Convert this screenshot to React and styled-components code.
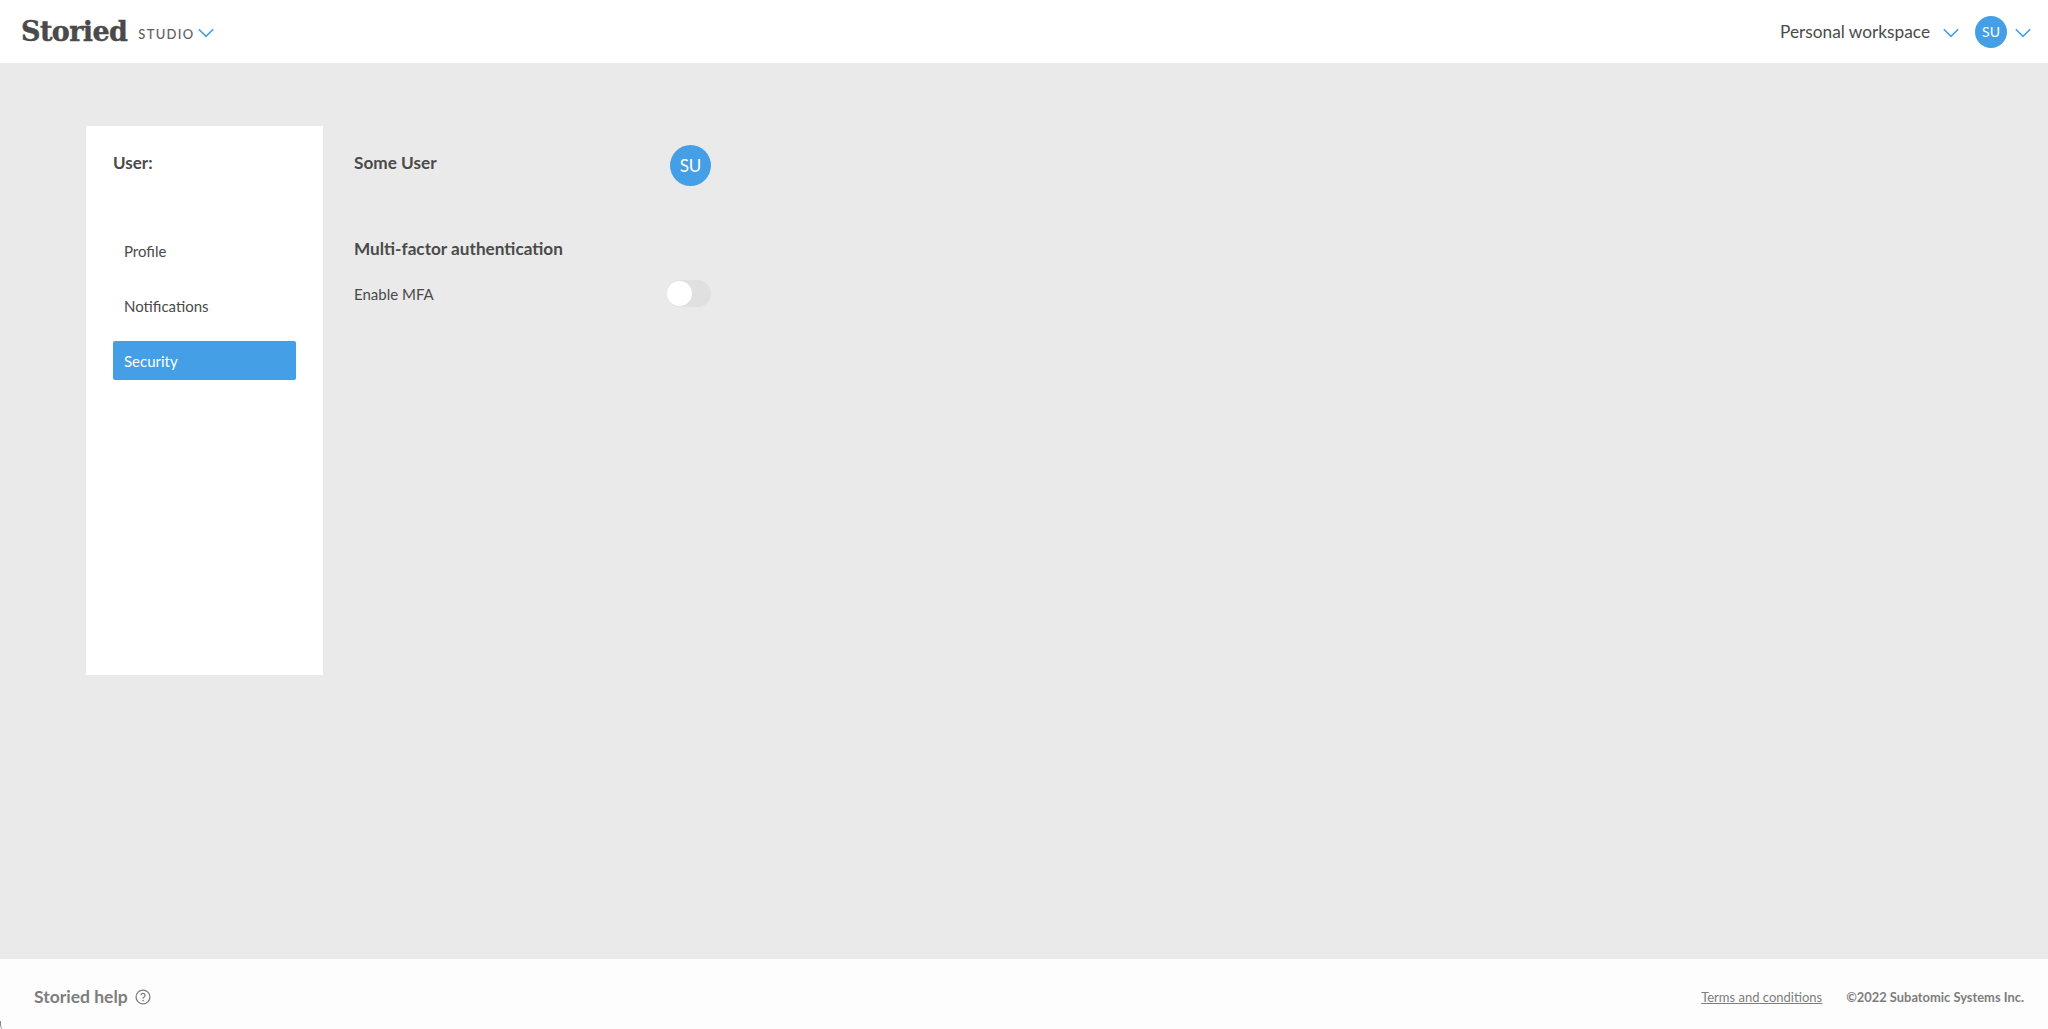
import styled, { createGlobalStyle } from 'styled-components';

const GlobalStyle = createGlobalStyle`
  html, body {
    margin: 0;
    padding: 0;
    height: 100%;
    background: #eaeaea;
    font-family: Lato, "Open Sans", sans-serif;
    color: #4a4a4a;
  }
  #root {
    height: 100%;
  }
`;

function Chevron({ size = 16 }) {
  return (
    <ChevronSvg width={size} height={size * 0.6} viewBox="0 0 20 12">
      <path d="M1 1.5 L10 10.5 L19 1.5" />
    </ChevronSvg>
  );
}

export default function App() {
  return (
    <Page>
      <GlobalStyle />
      <Header>
        <Brand>
          <Logo>Storied</Logo>
          <Studio>STUDIO</Studio>
          <Chevron />
        </Brand>
        <HeaderRight>
          <Workspace>Personal workspace</Workspace>
          <Chevron />
          <UserMenu>
            <Avatar size={32} fontSize={14}>SU</Avatar>
            <Chevron />
          </UserMenu>
        </HeaderRight>
      </Header>

      <Main>
        <Sidebar>
          <SidebarTitle>User:</SidebarTitle>
          <Nav>
            <NavItem>Profile</NavItem>
            <NavItem>Notifications</NavItem>
            <NavItem $active>Security</NavItem>
          </Nav>
        </Sidebar>

        <Content>
          <NameRow>
            <Heading>Some User</Heading>
            <Avatar size={41} fontSize={17}>SU</Avatar>
          </NameRow>
          <MfaHeading>Multi-factor authentication</MfaHeading>
          <MfaRow>
            <Label>Enable MFA</Label>
            <Toggle>
              <Knob />
            </Toggle>
          </MfaRow>
        </Content>
      </Main>

      <Footer>
        <Help>
          Storied help
          <svg width="16" height="16" viewBox="0 0 15 15" fill="none">
            <circle cx="7.5" cy="7.5" r="6.5" stroke="#7d7d7d" strokeWidth="1.2" />
            <path d="M5.6 5.9a1.9 1.9 0 1 1 2.8 1.7c-.6.3-.9.7-.9 1.4" stroke="#7d7d7d" strokeWidth="1.2" />
            <circle cx="7.5" cy="10.8" r=".8" fill="#7d7d7d" />
          </svg>
        </Help>
        <Legal>
          <Terms href="#">Terms and conditions</Terms>
          <Copyright>©2022 Subatomic Systems Inc.</Copyright>
        </Legal>
      </Footer>
    </Page>
  );
}

const Page = styled.div`
  display: flex;
  flex-direction: column;
  height: 100vh;
  overflow: hidden;
`;

const Header = styled.header`
  display: flex;
  justify-content: space-between;
  align-items: center;
  flex: 0 0 63px;
  box-sizing: border-box;
  padding: 0 17px 0 21px;
  background: #fff;
`;

const Brand = styled.div`
  display: flex;
  align-items: center;
`;

const Logo = styled.span`
  font-family: "DejaVu Serif", serif;
  font-weight: 700;
  font-size: 27px;
  letter-spacing: -0.6px;
  -webkit-text-stroke: 0.4px #4a4a4a;
  color: #4a4a4a;
`;

const Studio = styled.span`
  margin: 4px 3px 0 11px;
  font-size: 13px;
  font-weight: 500;
  letter-spacing: 1.3px;
  color: #5e5e5e;
`;

const ChevronSvg = styled.svg`
  margin-top: 3px;
  fill: none;
  stroke: #449fe6;
  stroke-width: 2;
`;

const HeaderRight = styled.div`
  display: flex;
  align-items: center;
`;

const Workspace = styled.span`
  margin-right: 13px;
  font-size: 17.25px;
  color: #4a4a4a;
`;

const UserMenu = styled.div`
  display: flex;
  align-items: center;
  gap: 8px;
  margin-left: 16px;
`;

const Avatar = styled.div.attrs((props) => ({
  style: { width: props.size, height: props.size, fontSize: props.fontSize },
}))`
  display: flex;
  align-items: center;
  justify-content: center;
  border-radius: 50%;
  background: #449fe6;
  color: #fff;
`;

const Main = styled.main`
  display: flex;
  flex: 1;
  padding: 63px 0 0 86px;
  background: #eaeaea;
`;

const Sidebar = styled.aside`
  width: 237px;
  height: 549px;
  box-sizing: border-box;
  padding: 27px 27px 0;
  background: #fff;
`;

const SidebarTitle = styled.h2`
  margin: 0;
  font-size: 17px;
  line-height: 20px;
  font-weight: 700;
  color: #4a4a4a;
`;

const Nav = styled.nav`
  display: flex;
  flex-direction: column;
  gap: 16px;
  margin-top: 58px;
`;

const NavItem = styled.a`
  display: block;
  height: 39px;
  padding: 0 11px;
  border-radius: 2px;
  font-size: 15px;
  line-height: 40px;
  color: ${(props) => (props.$active ? '#fff' : '#4a4a4a')};
  background: ${(props) => (props.$active ? '#449fe6' : 'transparent')};
`;

const Content = styled.section`
  width: 357px;
  margin-left: 31px;
  padding-top: 19px;
`;

const NameRow = styled.div`
  display: flex;
  justify-content: space-between;
  align-items: flex-start;
`;

const Heading = styled.h3`
  margin: 0;
  font-size: 17.2px;
  line-height: 20px;
  padding-top: 8px;
  font-weight: 700;
  color: #4a4a4a;
`;

const MfaHeading = styled(Heading)`
  margin-top: 53px;
  padding-top: 0;
`;

const MfaRow = styled.div`
  display: flex;
  justify-content: space-between;
  align-items: center;
  margin-top: 21px;
`;

const Label = styled.span`
  font-size: 15px;
  color: #4a4a4a;
`;

const Toggle = styled.div`
  position: relative;
  width: 44px;
  height: 27px;
  border-radius: 14px;
  background: #e0e0e0;
`;

const Knob = styled.div`
  position: absolute;
  top: 1px;
  left: 0;
  width: 25px;
  height: 25px;
  border-radius: 50%;
  background: #fff;
`;

const Footer = styled.footer`
  position: relative;
  display: flex;
  justify-content: space-between;
  align-items: center;
  flex: 0 0 70px;
  box-sizing: border-box;
  padding: 5px 24px 0 34px;
  background: #fdfdfd;

  &::after {
    content: '';
    position: absolute;
    left: 0;
    bottom: -1px;
    width: 4px;
    height: 9px;
    border-left: 1px solid #8a8a8a;
    border-bottom-left-radius: 5px;
  }
`;

const Help = styled.div`
  display: flex;
  align-items: center;
  gap: 7px;
  font-size: 17.5px;
  font-weight: 700;
  color: #7d7d7d;
`;

const Legal = styled.div`
  display: flex;
  align-items: center;
  gap: 24px;
  font-size: 13px;
  color: #7d7d7d;
`;

const Terms = styled.a`
  color: #7d7d7d;
  text-decoration: underline;
`;

const Copyright = styled.span`
  font-size: 12.9px;
  font-weight: 700;
`;
